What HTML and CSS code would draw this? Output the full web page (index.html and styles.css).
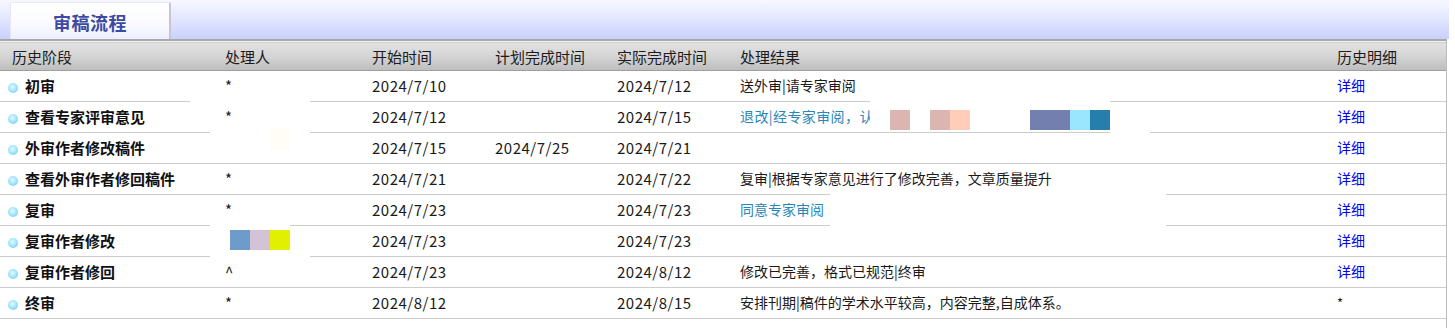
FILE: index.html
```html
<!DOCTYPE html>
<html lang="zh-CN">
<head>
<meta charset="utf-8">
<title>审稿流程</title>
<link rel="stylesheet" href="styles.css">
</head>
<body>
<div class="page">
  <div class="banner">
    <div class="tab">审稿流程</div>
  </div>
  <div class="grid">
    <table class="flow">
      <colgroup>
        <col class="c1"><col class="c2"><col class="c3"><col class="c4"><col class="c5"><col class="c6"><col class="c7">
      </colgroup>
      <thead>
        <tr>
          <th class="first">历史阶段</th>
          <th>处理人</th>
          <th>开始时间</th>
          <th>计划完成时间</th>
          <th>实际完成时间</th>
          <th>处理结果</th>
          <th>历史明细</th>
        </tr>
      </thead>
      <tbody>
        <tr>
          <td class="stage"><span class="dot"></span>初审</td>
          <td>*</td>
          <td class="date">2024/7/10</td>
          <td class="date"></td>
          <td class="date">2024/7/12</td>
          <td class="result">送外审|请专家审阅</td>
          <td class="result"><a class="detail" href="#">详细</a></td>
        </tr>
        <tr>
          <td class="stage"><span class="dot"></span>查看专家评审意见</td>
          <td>*</td>
          <td class="date">2024/7/12</td>
          <td class="date"></td>
          <td class="date">2024/7/15</td>
          <td class="result"><span class="res-link wide">退改|经专家审阅，认</span></td>
          <td class="result"><a class="detail" href="#">详细</a></td>
        </tr>
        <tr>
          <td class="stage"><span class="dot"></span>外审作者修改稿件</td>
          <td></td>
          <td class="date">2024/7/15</td>
          <td class="date">2024/7/25</td>
          <td class="date">2024/7/21</td>
          <td class="result"></td>
          <td class="result"><a class="detail" href="#">详细</a></td>
        </tr>
        <tr>
          <td class="stage"><span class="dot"></span>查看外审作者修回稿件</td>
          <td>*</td>
          <td class="date">2024/7/21</td>
          <td class="date"></td>
          <td class="date">2024/7/22</td>
          <td class="result">复审|根据专家意见进行了修改完善，文章质量提升</td>
          <td class="result"><a class="detail" href="#">详细</a></td>
        </tr>
        <tr>
          <td class="stage"><span class="dot"></span>复审</td>
          <td>*</td>
          <td class="date">2024/7/23</td>
          <td class="date"></td>
          <td class="date">2024/7/23</td>
          <td class="result"><span class="res-link">同意专家审阅</span></td>
          <td class="result"><a class="detail" href="#">详细</a></td>
        </tr>
        <tr>
          <td class="stage"><span class="dot"></span>复审作者修改</td>
          <td></td>
          <td class="date">2024/7/23</td>
          <td class="date"></td>
          <td class="date">2024/7/23</td>
          <td class="result"></td>
          <td class="result"><a class="detail" href="#">详细</a></td>
        </tr>
        <tr>
          <td class="stage"><span class="dot"></span>复审作者修回</td>
          <td>^</td>
          <td class="date">2024/7/23</td>
          <td class="date"></td>
          <td class="date">2024/8/12</td>
          <td class="result">修改已完善，格式已规范|终审</td>
          <td class="result"><a class="detail" href="#">详细</a></td>
        </tr>
        <tr>
          <td class="stage"><span class="dot"></span>终审</td>
          <td>*</td>
          <td class="date">2024/8/12</td>
          <td class="date"></td>
          <td class="date">2024/8/15</td>
          <td class="result">安排刊期|稿件的学术水平较高，内容完整,自成体系。</td>
          <td class="star">*</td>
        </tr>
      </tbody>
    </table>
  </div>

  <!-- redaction patches lying over the table -->
  <div class="patch p-row2"></div>
  <div class="patch p-row2b"></div>
  <div class="patch p-r1c2"></div>
  <div class="patch p-r2c2"></div>
  <div class="patch faint p-r3c2"></div>
  <div class="patch p-row5"></div>
  <div class="patch p-r6top"></div>
  <div class="patch p-r6bot"></div>

  <div class="swatch s1"></div>
  <div class="swatch s2"></div>
  <div class="swatch s3"></div>
  <div class="swatch s4"></div>
  <div class="swatch s5"></div>
  <div class="swatch s6"></div>
  <div class="swatch s7"></div>
  <div class="swatch s8"></div>
  <div class="swatch s9"></div>
</div>
</body>
</html>
```

FILE: styles.css
```css
* { box-sizing: border-box; }

html, body {
  margin: 0;
  padding: 0;
  background: #ffffff;
}

body {
  font-family: "Noto Sans CJK SC", "Microsoft YaHei", sans-serif;
  font-size: 14px;
  color: #1a1a1a;
}

.page {
  position: relative;
  width: 1455px;
  height: 328px;
  overflow: hidden;
}

.banner {
  width: 1449px;
  height: 39px;
  padding: 2px 0 0 10px;
  background: linear-gradient(to bottom, #f6f7ff 0%, #e4e8ff 45%, #c9d0fc 100%);
  display: flex;
  align-items: flex-start;
}

.tab {
  width: 161px;
  height: 37px;
  display: flex;
  align-items: center;
  justify-content: center;
  padding-top: 1px;
  font-size: 18px;
  font-weight: bold;
  color: #3c4aa3;
  letter-spacing: 0.5px;
  background: linear-gradient(to bottom, #ffffff 0%, #fbfbff 55%, #eceffe 100%);
  border: 1px solid #e6e8f4;
  border-right: 2px solid #c4c6d4;
  border-bottom: none;
  border-radius: 2px 2px 0 0;
}

.grid {
  width: 1447px;
  border-top: 2px solid #a9a9a9;
  border-right: 1px solid #bdbdbd;
  min-height: 289px;
}

.flow {
  width: 1446px;
  border-collapse: collapse;
  table-layout: fixed;
}

.c1 { width: 225px; }
.c2 { width: 147px; }
.c3 { width: 123px; }
.c4 { width: 122px; }
.c5 { width: 123px; }
.c6 { width: 597px; }
.c7 { width: 109px; }

.flow th {
  height: 29px;
  padding: 0;
  text-align: left;
  font-weight: normal;
  font-size: 15px;
  color: #1c1c1c;
  border-top: 1px solid #f2f2f2;
  border-bottom: 1px solid #9f9f9f;
  background: linear-gradient(to bottom, #e2e2e2 0%, #d4d4d4 50%, #bdbdbd 100%);
  vertical-align: middle;
  white-space: nowrap;
}

.flow th.first { padding-left: 12px; }

.flow td {
  height: 31px;
  padding: 0 0 2px 0;
  border-bottom: 1px solid #cccccc;
  vertical-align: middle;
  white-space: nowrap;
  font-size: 15px;
  color: #1a1a1a;
}

.flow td.date {
  letter-spacing: 0.5px;
}

.flow td.result {
  font-size: 14px;
}

.flow td.stage {
  padding-left: 8px;
  font-size: 15px;
  font-weight: bold;
  color: #111;
}

.dot {
  display: inline-block;
  width: 10px;
  height: 10px;
  margin-right: 7px;
  border-radius: 50%;
  vertical-align: -1px;
  background: radial-gradient(circle at 45% 40%, #e6fbff 0%, #a6e6ff 45%, #56c4f0 100%);
}

.detail {
  color: #0000f0;
  text-decoration: none;
}

.res-link {
  color: #2a86b9;
}

.res-link.wide {
  letter-spacing: 0.4px;
}

.flow td.star {
  font-size: 13px;
}

.patch {
  position: absolute;
  background: #ffffff;
}

.patch.faint { background: #fffdf6; }

.p-row2  { left: 870px; top: 101px; width: 240px; height: 31px; }
.p-row2b { left: 1110px; top: 132px; width: 40px; height: 1px; }
.p-r1c2  { left: 190px; top: 101px; width: 120px; height: 1px; }
.p-r2c2  { left: 210px; top: 132px; width: 100px; height: 1px; }
.p-r3c2  { left: 270px; top: 129px; width: 20px; height: 21px; }
.p-row5  { left: 830px; top: 194px; width: 336px; height: 32px; }
.p-r6top { left: 210px; top: 225px; width: 80px; height: 1px; }
.p-r6bot { left: 210px; top: 256px; width: 100px; height: 1px; }

.swatch {
  position: absolute;
  top: 110px;
  height: 20px;
  width: 20px;
}

.s1 { left: 890px;  background: #dbb6b0; }
.s2 { left: 930px;  background: #dbb6b0; }
.s3 { left: 950px;  background: #ffcdb9; }
.s4 { left: 1030px; width: 40px; background: #737fae; }
.s5 { left: 1070px; background: #9ae6ff; }
.s6 { left: 1090px; background: #267faa; }
.s7 { left: 230px; top: 230px; background: #6f9bcb; }
.s8 { left: 250px; top: 230px; background: #d4c3d4; }
.s9 { left: 270px; top: 230px; background: #e0f000; }
```
